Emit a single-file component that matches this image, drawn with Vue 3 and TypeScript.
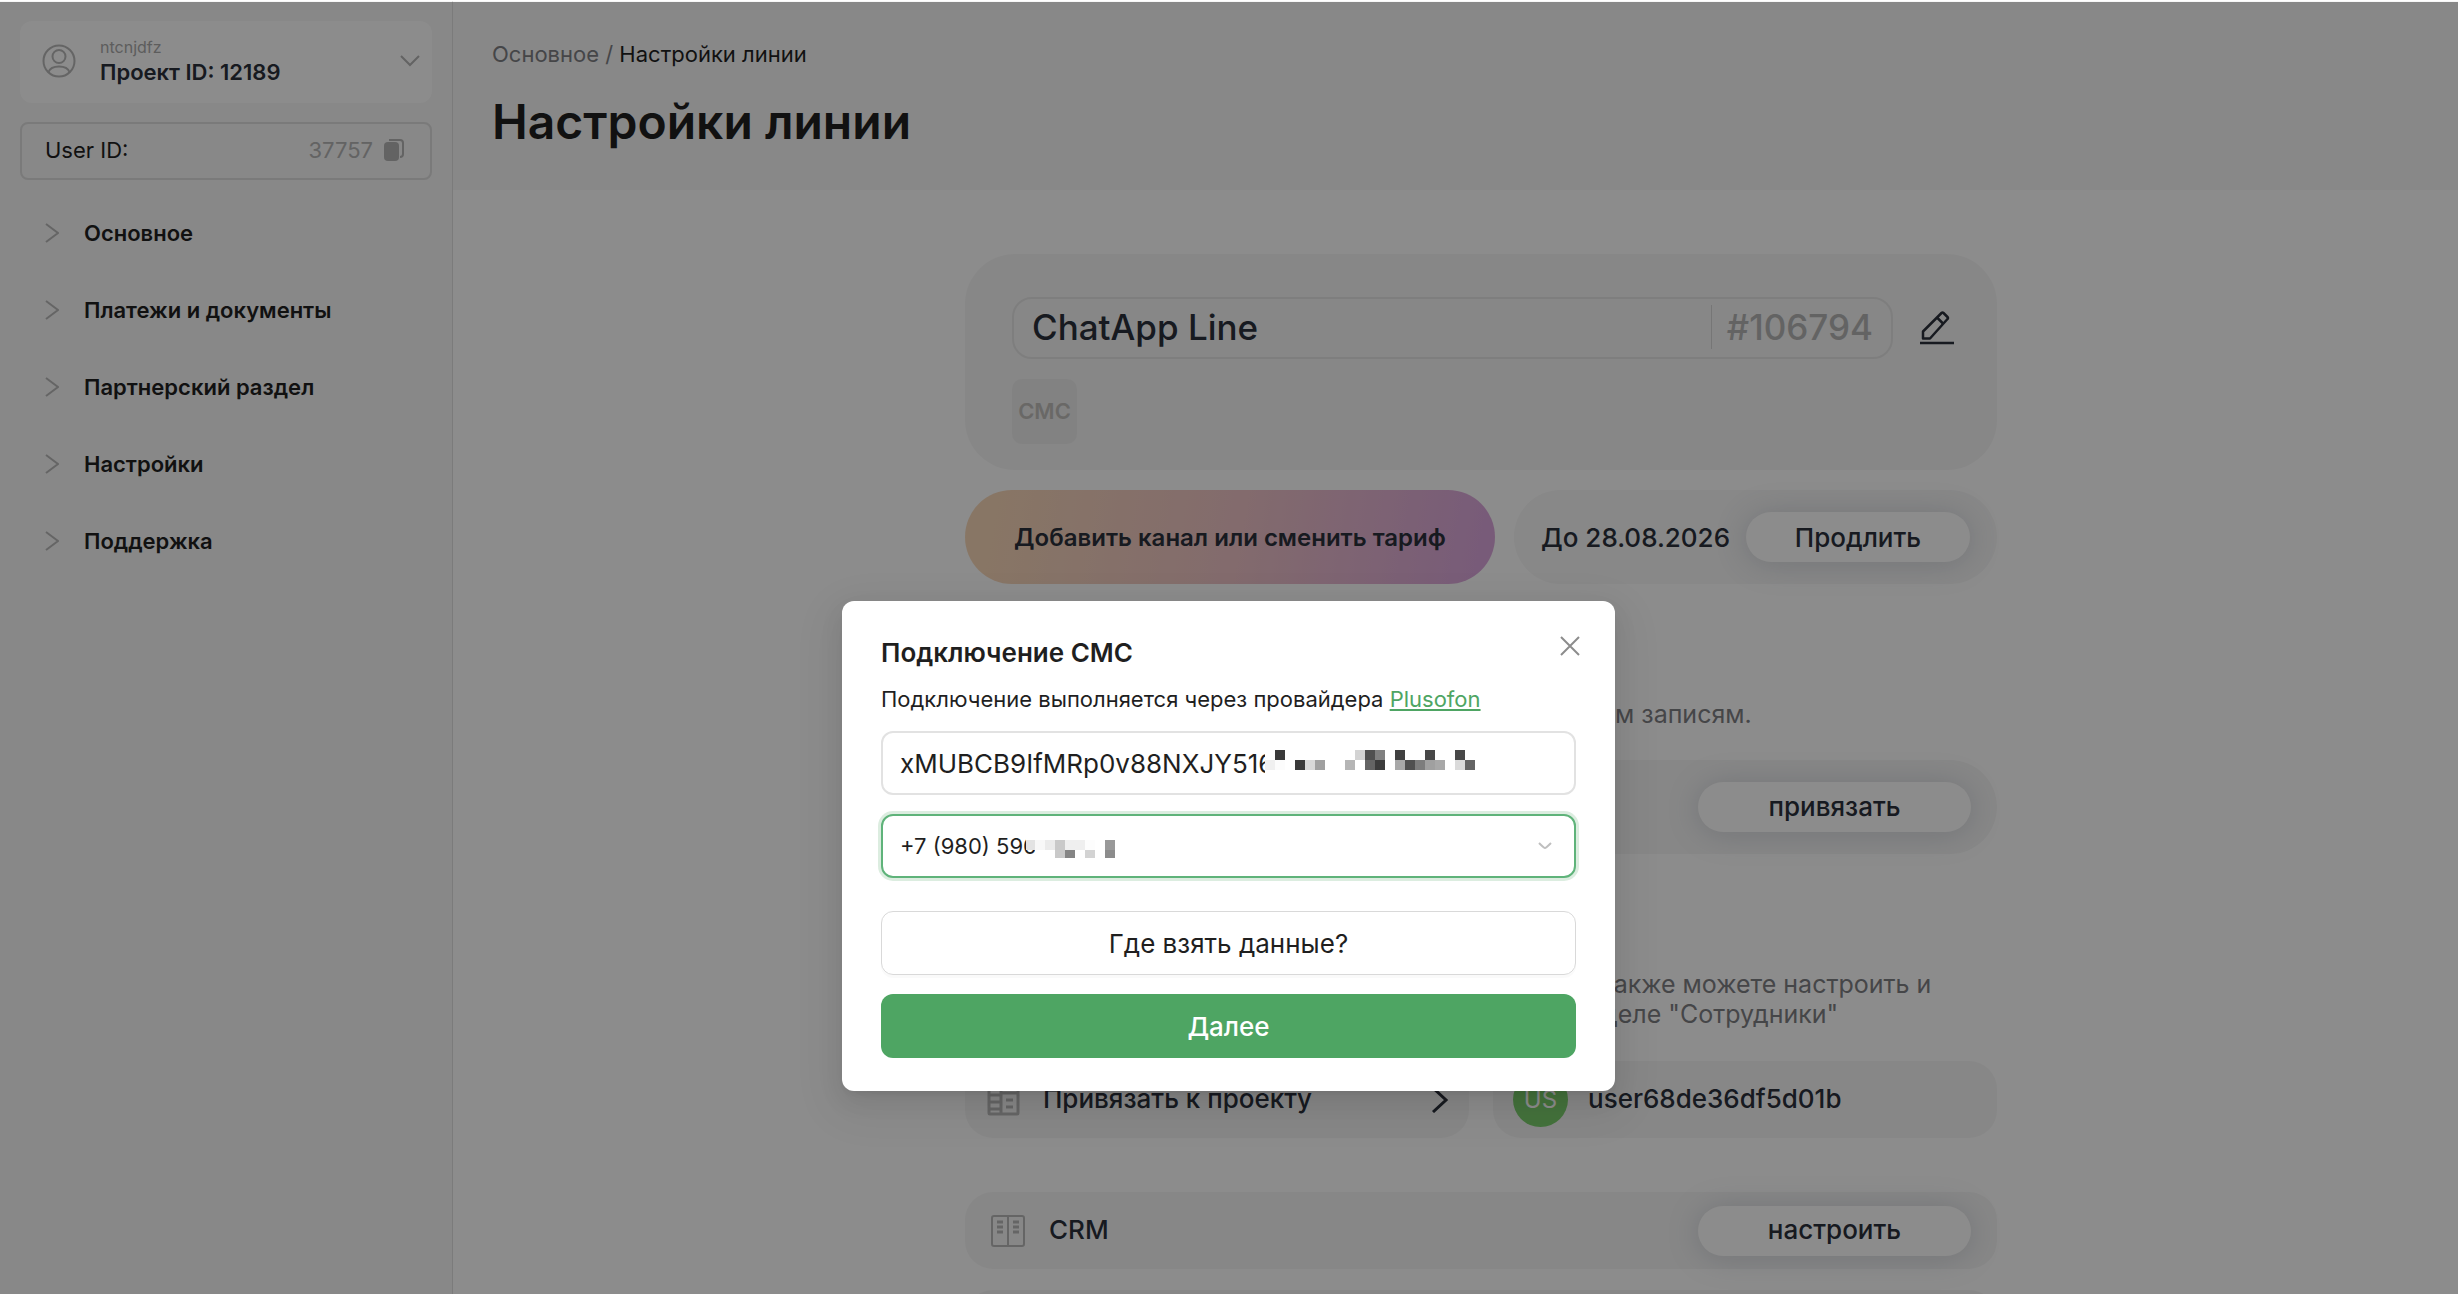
<script setup lang="ts">
import { ref } from 'vue'

interface Cell {
  x: number
  y: number
  w?: number
  h?: number
  fill: string
}

const menu: string[] = ['Основное', 'Платежи и документы', 'Партнерский раздел', 'Настройки', 'Поддержка']

const token = ref('xMUBCB9IfMRp0v88NXJY516')
const phones: string[] = ['+7 (980) 590']
const phone = ref(phones[0])

// Mosaic cells that hide the tail of the token
const tokenMask: Cell[] = [
  { x: 10, y: 0, fill: '#3a3a3a' },
  { x: 90, y: 0, fill: '#d3d3d3' },
  { x: 100, y: 0, fill: '#505050' },
  { x: 110, y: 0, fill: '#808080' },
  { x: 130, y: 0, fill: '#404040' },
  { x: 160, y: 0, fill: '#484848' },
  { x: 190, y: 0, fill: '#484848' },
  { x: 0, y: 10, fill: '#f0f0f0' },
  { x: 10, y: 10, fill: '#fcfcfc' },
  { x: 30, y: 10, fill: '#3a3a3a' },
  { x: 40, y: 10, fill: '#d8d8d8' },
  { x: 50, y: 10, fill: '#a0a0a0' },
  { x: 80, y: 10, fill: '#b5b5b5' },
  { x: 100, y: 10, fill: '#646464' },
  { x: 110, y: 10, fill: '#3c3c3c' },
  { x: 130, y: 10, fill: '#a8a8a8' },
  { x: 140, y: 10, fill: '#505050' },
  { x: 150, y: 10, fill: '#7d7d7d' },
  { x: 160, y: 10, fill: '#a0a0a0' },
  { x: 170, y: 10, fill: '#a8a8a8' },
  { x: 190, y: 10, fill: '#dadada' },
  { x: 200, y: 10, fill: '#646464' },
]

// Mosaic cells that hide the tail of the phone number
const phoneMask: Cell[] = [
  { x: 0, y: 0, w: 9, fill: '#e3e3e3' },
  { x: 9, y: 0, fill: '#f8f8f8' },
  { x: 19, y: 0, fill: '#ebebeb' },
  { x: 29, y: 0, fill: '#c9c9c9' },
  { x: 39, y: 0, w: 20, fill: '#efefef' },
  { x: 59, y: 0, fill: '#fdfdfd' },
  { x: 79, y: 0, fill: '#999999' },
  { x: 29, y: 10, h: 8, fill: '#c9c9c9' },
  { x: 39, y: 10, h: 8, fill: '#858585' },
  { x: 59, y: 10, h: 8, fill: '#d3d3d3' },
  { x: 79, y: 10, h: 8, fill: '#8c8c8c' },
]
</script>

<template>
  <div class="page">
    <div class="layout">
      <aside class="sidebar">
        <button class="project" type="button">
          <svg class="avatar" viewBox="0 0 34 34" fill="none" stroke="#b8b8b8" stroke-width="2">
            <circle cx="17" cy="17" r="15.5" />
            <circle cx="17" cy="12.5" r="6.5" />
            <path d="M6.5 28c1.500-4 5-5.500 10.500-5.500s9 1.500 10.500 5.500" />
          </svg>
          <span class="project-text">
            <span class="project-name">ntcnjdfz</span>
            <span class="project-id">Проект ID: 12189</span>
          </span>
          <svg class="chev-down" viewBox="0 0 20 12" fill="none" stroke="#b4b4b4" stroke-width="2">
            <path d="M1 1l9 9 9-9" />
          </svg>
        </button>
        <div class="user">
          <span>User ID:</span>
          <span class="user-value">37757</span>
          <button class="copy" type="button" aria-label="Копировать">
            <svg viewBox="0 0 20 22">
              <path d="M6 2V1h10c2 0 3 1 3 3v11c0 2-1 3-3 3" fill="none" stroke="#b4b4b4" stroke-width="2" />
              <rect x="0" y="3" width="15" height="19" rx="4" fill="#b4b4b4" />
            </svg>
          </button>
        </div>
        <nav class="menu">
          <a v-for="item in menu" :key="item" href="#" class="menu-item">
            <svg viewBox="0 0 14 20" fill="none" stroke="#b8b8b8" stroke-width="2">
              <path d="M1 1l12 9-12 9" />
            </svg>
            {{ item }}
          </a>
        </nav>
      </aside>

      <main class="main">
        <header class="head">
          <nav class="crumbs"><a href="#">Основное</a> / <span>Настройки линии</span></nav>
          <h1>Настройки линии</h1>
        </header>

        <div class="content">
          <section class="line-card">
            <div class="line-row">
              <div class="line-name">
                <span class="line-title">ChatApp Line</span>
                <span class="line-id">#106794</span>
              </div>
              <button class="edit" type="button" aria-label="Изменить">
                <svg viewBox="0 0 36 36" fill="none" stroke="#2b303b" stroke-width="2.500" stroke-linejoin="round">
                  <path d="M4 28.500v-7L22.500 3q1-1 2 0l4 4q1 1 0 2L11 28.500z" />
                  <path d="M18 7.500l6 6" />
                  <path d="M1 33h34" />
                </svg>
              </button>
            </div>
            <span class="sms">СМС</span>
          </section>

          <div class="actions">
            <button class="tariff" type="button">Добавить канал или сменить тариф</button>
            <div class="until">
              <span>До 28.08.2026</span>
              <button class="pill" type="button">Продлить</button>
            </div>
          </div>

          <p class="note note-records">м записям.</p>
          <section class="bind">
            <button class="pill wide" type="button">привязать</button>
          </section>

          <p class="note note-staff">также можете настроить и<br />деле "Сотрудники"</p>
          <div class="pair">
            <a class="tile" href="#">
              <svg class="tile-icon" viewBox="0 0 34 32" fill="none" stroke="#b8b8b8" stroke-width="3">
                <rect x="2" y="2" width="29" height="28" rx="1" />
                <path d="M14 2v28M2 11h12M2 18h12M2 25h12M14 9h17M19 16h7M19 23h7" />
              </svg>
              <span class="tile-text grow">Привязать к проекту</span>
              <svg class="chev-right" viewBox="0 0 18 26" fill="none" stroke="#2b303b" stroke-width="3">
                <path d="M2 1l13 12L2 25" />
              </svg>
            </a>
            <div class="tile employee">
              <span class="badge">US</span>
              <span class="tile-text">user68de36df5d01b</span>
            </div>
          </div>

          <section class="tile crm">
            <svg class="crm-icon" viewBox="0 0 34 32" fill="none" stroke="#b8b8b8" stroke-width="2">
              <rect x="1" y="1" width="32" height="30" rx="2" />
              <path d="M17 1v30" />
              <path d="M6 7h6M6 12h6M6 17h6M22 7h6M22 12h6M22 17h6" stroke-width="3" />
            </svg>
            <span class="tile-text grow">CRM</span>
            <button class="pill wide" type="button">настроить</button>
          </section>
          <section class="tile next"></section>
        </div>
      </main>
    </div>

    <div class="overlay">
      <form class="modal" role="dialog" aria-labelledby="modal-title" @submit.prevent>
        <button class="close" type="button" aria-label="Закрыть">
          <svg viewBox="0 0 20 20" fill="none" stroke="#8c8c8c" stroke-width="2">
            <path d="M1 1l18 18M19 1L1 19" />
          </svg>
        </button>
        <h2 id="modal-title">Подключение СМС</h2>
        <p class="lead">Подключение выполняется через провайдера <a href="#">Plusofon</a></p>
        <div class="field">
          <input v-model="token" class="control token" type="text" aria-label="Токен" />
          <svg class="mask token-mask" viewBox="0 0 210 40" aria-hidden="true">
            <rect width="210" height="40" fill="#fff" />
            <rect v-for="(c, i) in tokenMask" :key="i" :x="c.x" :y="c.y + 10" width="10" height="10" :fill="c.fill" />
          </svg>
        </div>
        <div class="field">
          <select v-model="phone" class="control phone" aria-label="Номер телефона">
            <option v-for="p in phones" :key="p" :value="p">{{ p }}</option>
          </select>
          <svg class="mask phone-mask" viewBox="0 0 90 34" aria-hidden="true">
            <rect width="90" height="18" fill="#fff" />
            <rect x="9" y="16" width="81" height="18" fill="#fff" />
            <rect
              v-for="(c, i) in phoneMask"
              :key="i"
              :x="c.x"
              :y="c.y + 8"
              :width="c.w ?? 10"
              :height="c.h ?? 10"
              :fill="c.fill"
            />
          </svg>
          <svg class="arrow" viewBox="0 0 14 8" fill="none" stroke="#bfbfbf" stroke-width="2">
            <path d="M1 1q5 5 6 5t6-5" />
          </svg>
        </div>
        <button class="btn plain" type="button">Где взять данные?</button>
        <button class="btn primary" type="submit">Далее</button>
      </form>
    </div>
  </div>
</template>

<style>
body {
  margin: 0;
  background: #fff;
}
</style>

<style scoped>
* {
  box-sizing: border-box;
}
.page {
  position: relative;
  height: 100vh;
  overflow: hidden;
  border-top: 1px solid #fff;
  font-family: Inter, 'Liberation Sans', sans-serif;
  font-size: 22px;
  color: #1f1f1f;
}
button,
input,
select {
  font: inherit;
  color: inherit;
  margin: 0;
  padding: 0;
  border: 0;
  background: none;
}
a {
  color: inherit;
  text-decoration: none;
}
svg {
  display: block;
  flex: none;
}
.layout {
  display: flex;
  min-height: 100%;
}
.sidebar {
  flex: none;
  width: 453px;
  padding: 20px;
  border-right: 1px solid #e0e0e0;
  background: #f7f7f7;
}
.project {
  display: flex;
  align-items: center;
  width: 100%;
  height: 82px;
  padding: 0 12px 2px 22px;
  border-radius: 12px;
  background: #fff;
  text-align: left;
}
.avatar {
  width: 34px;
  height: 34px;
}
.project-text {
  flex: 1;
  margin-left: 24px;
}
.project-name,
.project-id {
  display: block;
}
.project-name {
  font-size: 16px;
  line-height: 22px;
  color: #aaa;
}
.project-id {
  font-weight: 600;
  line-height: 28px;
  color: #2b303b;
}
.chev-down {
  width: 20px;
  height: 12px;
}
.user {
  display: flex;
  align-items: center;
  height: 58px;
  margin-top: 19px;
  padding: 0 26px 2px 23px;
  border: 2px solid #dedede;
  border-radius: 8px;
}
.user-value {
  margin-left: auto;
  color: #b4b4b4;
}
.copy {
  margin-left: 11px;
}
.copy svg {
  width: 20px;
  height: 22px;
}
.menu {
  padding-top: 14px;
}
.menu-item {
  display: flex;
  align-items: center;
  gap: 25px;
  height: 77px;
  padding-left: 25px;
  font-weight: 600;
}
.menu-item svg {
  width: 14px;
  height: 20px;
}
.main {
  flex: 1;
  min-width: 0;
}
.head {
  height: 189px;
  padding: 36px 39px;
  background: #f7f7f7;
}
.crumbs {
  line-height: 34px;
}
.crumbs,
.crumbs a {
  color: #7f8084;
}
.crumbs span {
  color: #1f1f1f;
}
h1 {
  margin: 22px 0 0;
  font-size: 48px;
  font-weight: 600;
  line-height: 58px;
}
.content {
  width: 1083px;
  max-width: 100%;
  margin: 0 auto;
  padding: 64px 0 0 51px;
  font-size: 26px;
  font-weight: 500;
  color: #2b303b;
}
.line-card {
  height: 216px;
  padding: 43px 42px 0 47px;
  border-radius: 50px;
  background: #f6f6f6;
}
.line-row {
  display: flex;
  align-items: center;
}
.line-name {
  display: flex;
  align-items: center;
  flex: 1;
  height: 62px;
  padding: 0 18px 2px;
  border: 2px solid #e6e6e6;
  border-radius: 20px;
  font-size: 35px;
}
.line-title {
  flex: 1;
}
.line-id {
  padding-left: 15px;
  border-left: 1px solid #d8d8d8;
  line-height: 44px;
  color: #b4b4b4;
}
.edit {
  margin-left: 26px;
}
.edit svg {
  width: 36px;
  height: 36px;
}
.sms {
  display: flex;
  align-items: center;
  justify-content: center;
  width: 65px;
  height: 65px;
  margin-top: 20px;
  padding-bottom: 2px;
  border-radius: 10px;
  background: #ededed;
  font-size: 22px;
  font-weight: 600;
  color: #c0bdbb;
}
.actions {
  display: flex;
  gap: 19px;
  margin-top: 20px;
}
.tariff {
  width: 530px;
  height: 94px;
  border-radius: 47px;
  background: linear-gradient(100deg, #f8d8b8 4%, #eec3c7 52%, #dba7dc 96%);
  font-size: 24px;
  font-weight: 600;
}
.until {
  display: flex;
  flex: 1;
  align-items: center;
  justify-content: space-between;
  height: 94px;
  padding: 0 27px;
  border-radius: 47px;
  background: #f7f7f7;
}
.pill {
  width: 224px;
  height: 50px;
  border-radius: 25px;
  background: #fff;
  box-shadow: 0 2px 32px rgba(76, 90, 120, 0.22);
}
.wide {
  width: 273px;
  padding-bottom: 2px;
}
.note {
  margin: 0;
  font-size: 25px;
  line-height: 30px;
  font-weight: 400;
  color: #7f8084;
}
.note-records {
  margin-top: 115px;
  padding-left: 650px;
}
.bind {
  display: flex;
  align-items: center;
  justify-content: flex-end;
  height: 94px;
  margin-top: 31px;
  padding: 0 26px;
  border-radius: 47px;
  background: #f6f6f6;
}
.note-staff {
  margin-top: 115px;
  padding-left: 637px;
}
.pair {
  display: grid;
  grid-template-columns: 1fr 1fr;
  gap: 24px;
  margin-top: 32px;
}
.tile {
  display: flex;
  align-items: center;
  height: 77px;
  padding: 0 20px;
  border-radius: 28px;
  background: #f6f6f6;
}
.tile-text {
  padding-bottom: 3px;
}
.tile-icon {
  width: 34px;
  height: 32px;
  margin: 0 22px 0 2px;
}
.grow {
  flex: 1;
}
.chev-right {
  width: 18px;
  height: 26px;
}
.badge {
  display: flex;
  align-items: center;
  justify-content: center;
  width: 55px;
  height: 55px;
  margin-right: 20px;
  border-radius: 50%;
  background: #7cd06e;
  font-size: 24px;
  font-weight: 400;
  color: #fff;
}
.crm {
  margin-top: 54px;
  padding: 0 26px;
}
.crm-icon {
  width: 34px;
  height: 32px;
  margin-right: 24px;
}
.next {
  margin-top: 21px;
}
.overlay {
  position: absolute;
  inset: 1px 0 0;
  display: flex;
  justify-content: center;
  align-items: flex-start;
  padding: 599px 1px 0 0;
  background: rgba(0, 0, 0, 0.45);
}
.modal {
  position: relative;
  width: 773px;
  padding: 36px 39px 33px;
  border-radius: 12px;
  background: #fff;
  box-shadow:
    0 9px 25px rgba(0, 0, 0, 0.08),
    0 5px 9px -6px rgba(0, 0, 0, 0.12),
    0 14px 44px 12px rgba(0, 0, 0, 0.05);
}
.close {
  position: absolute;
  top: 35px;
  right: 35px;
}
.close svg {
  width: 20px;
  height: 20px;
}
h2 {
  margin: 0;
  font-size: 26px;
  font-weight: 600;
  line-height: 32px;
}
.lead {
  margin: 14px 0 16px;
  line-height: 32px;
}
.lead a {
  color: #4ea563;
  text-decoration: underline;
}
.field {
  position: relative;
  margin-bottom: 19px;
}
.control {
  display: block;
  width: 100%;
  height: 64px;
  padding: 0 17px;
  border: 2px solid #e2e2e2;
  border-radius: 12px;
  background: #fff;
  appearance: none;
  outline: none;
}
.token {
  font-size: 26px;
}
.phone {
  padding: 0 17px;
  border-color: #5fb37a;
  box-shadow: 0 0 0 3px rgba(78, 165, 99, 0.2);
}
.mask {
  position: absolute;
}
.token-mask {
  top: 9px;
  left: 384px;
  width: 210px;
  height: 40px;
}
.phone-mask {
  top: 18px;
  left: 145px;
  width: 90px;
  height: 34px;
}
.arrow {
  position: absolute;
  top: 28px;
  right: 24px;
  width: 14px;
  height: 8px;
}
.btn {
  display: block;
  width: 100%;
  height: 64px;
  border-radius: 12px;
  font-size: 26px;
}
.plain {
  margin-top: 33px;
  border: 1px solid #d9d9d9;
  box-shadow: 0 3px 0 rgba(0, 0, 0, 0.02);
}
.primary {
  margin-top: 19px;
  background: #4ea563;
  color: #fff;
  font-weight: 500;
}
</style>
